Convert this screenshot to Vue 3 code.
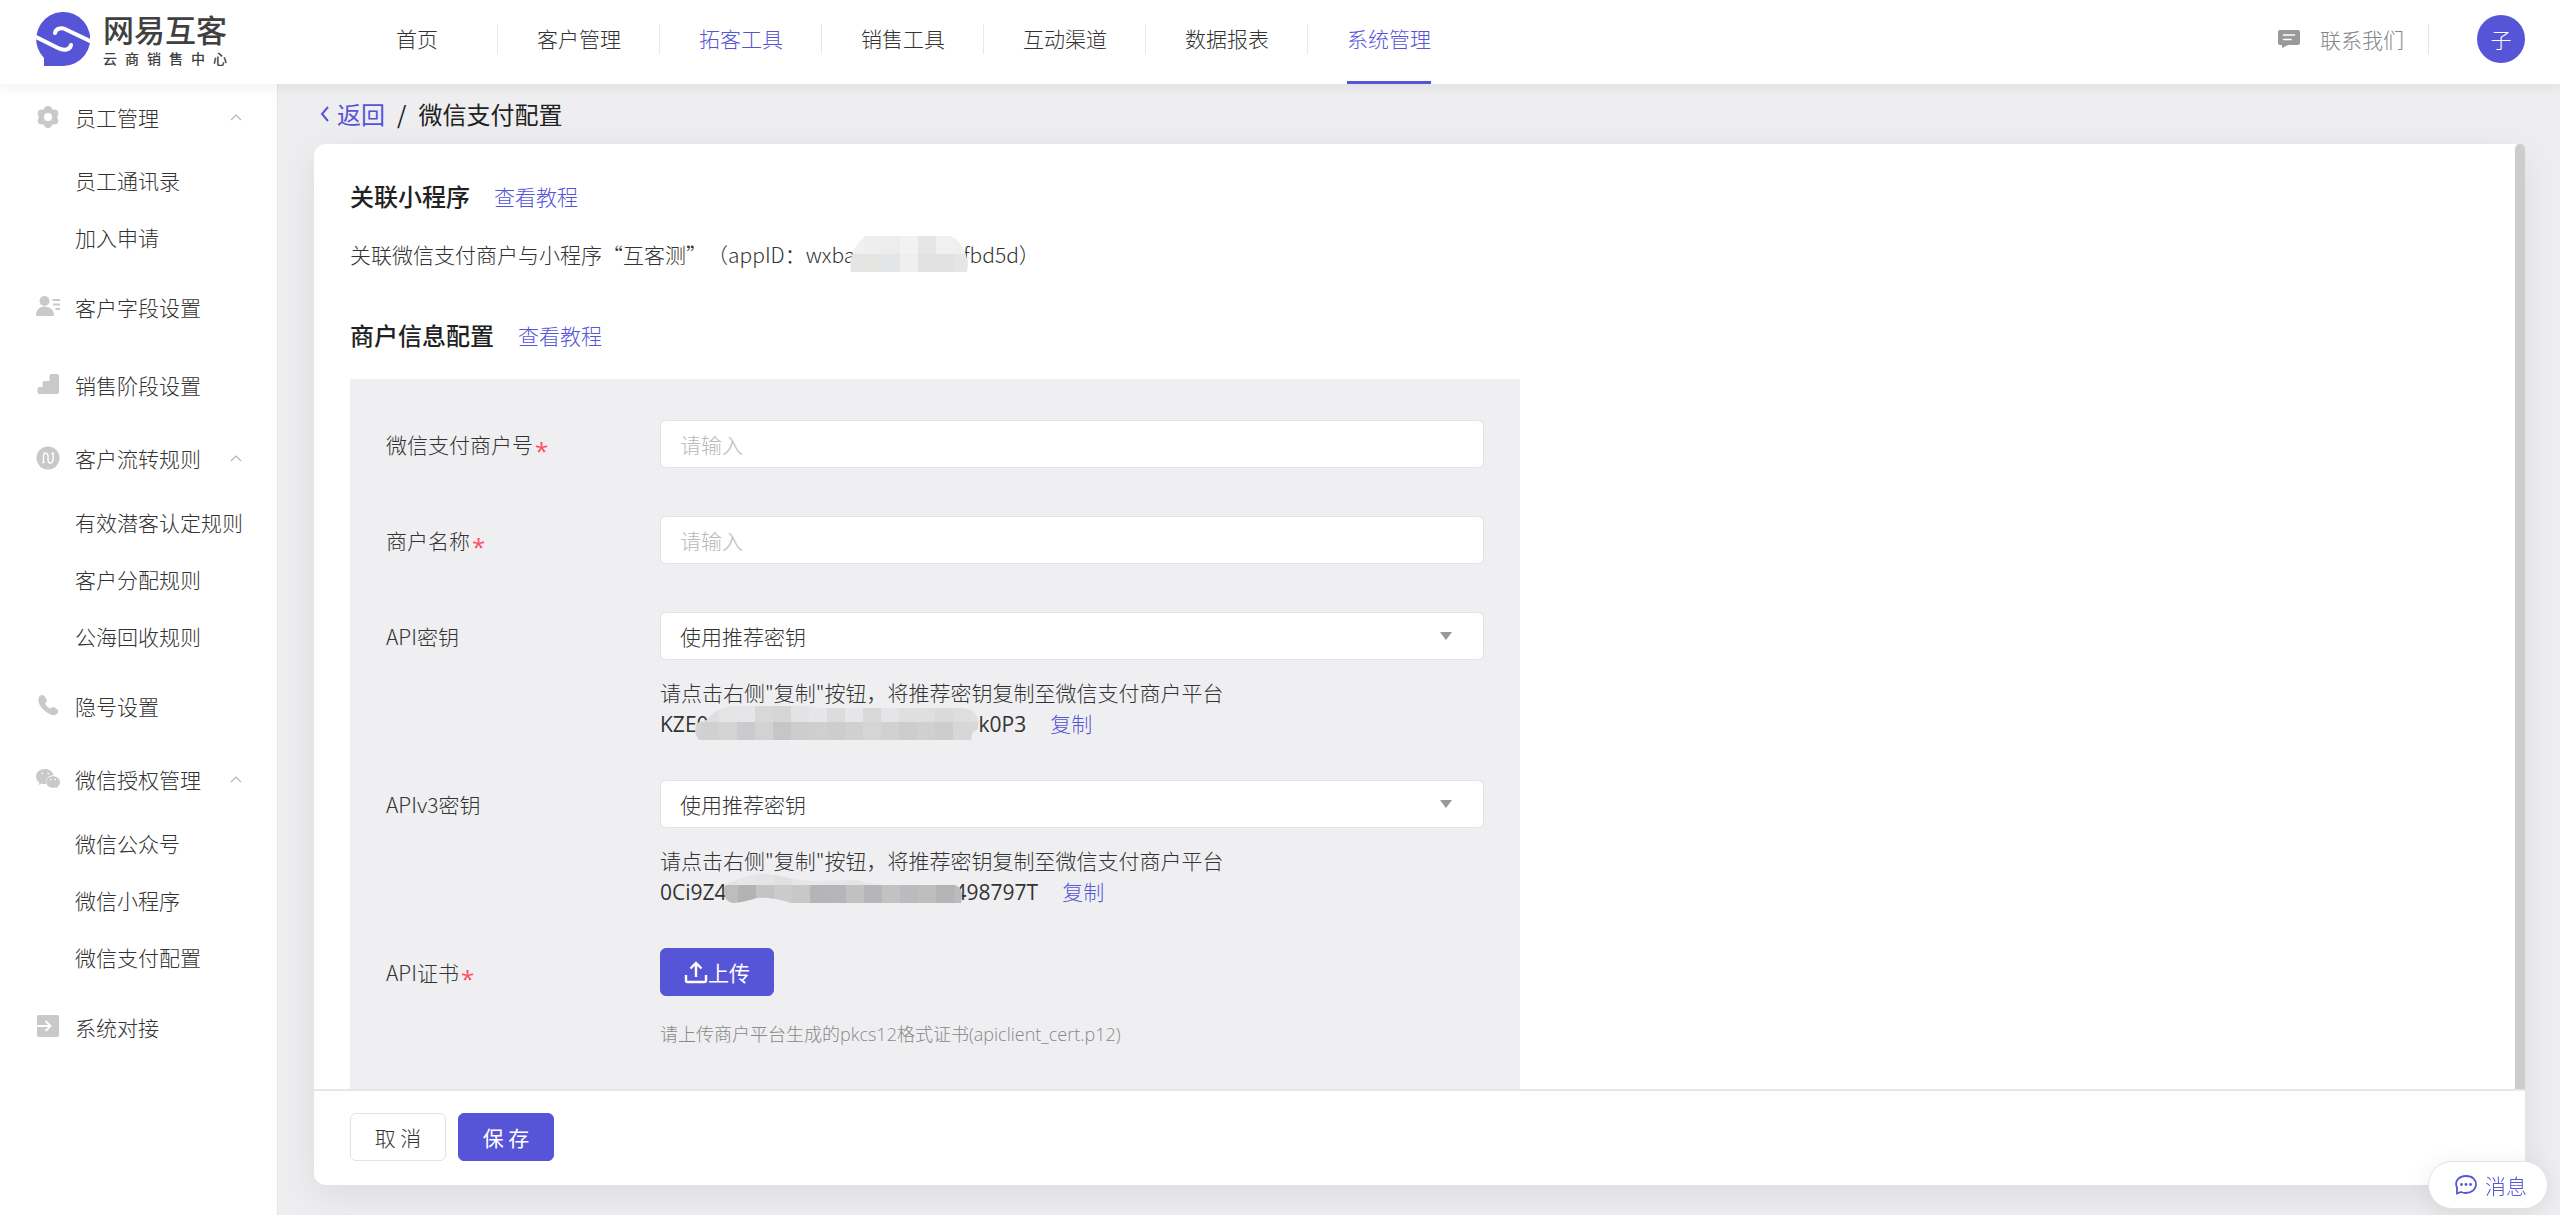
<script setup>
import { ref } from 'vue'

const navItems = ['首页', '客户管理', '拓客工具', '销售工具', '互动渠道', '数据报表', '系统管理']
const highlighted = ['拓客工具', '系统管理']
const activeNav = ref('系统管理')

const menu = [
  { label: '员工管理', icon: 'gear', children: ['员工通讯录', '加入申请'] },
  { label: '客户字段设置', icon: 'user' },
  { label: '销售阶段设置', icon: 'stairs' },
  { label: '客户流转规则', icon: 'flow', children: ['有效潜客认定规则', '客户分配规则', '公海回收规则'] },
  { label: '隐号设置', icon: 'phone' },
  { label: '微信授权管理', icon: 'wechat', children: ['微信公众号', '微信小程序', '微信支付配置'] },
  { label: '系统对接', icon: 'link' },
]

const merchantNo = ref('')
const merchantName = ref('')
const keyTip = '请点击右侧"复制"按钮，将推荐密钥复制至微信支付商户平台'

const keyFields = [
  {
    id: 'api-key', label: 'API密钥', head: 'KZE0', tail: 'k0P3', gap: 270,
    left: -14, shift: -12, split: 16,
    cover: 'M4 34C-2 26 0 18 4 16L12 14C18 4 30 0 40 0H110L128 2H268C282 4 284 12 283 20Q284 24 278 26L276 34Z',
    top: ['#dedede', '#dedede', '#e5e5e6', '#e6e6e8', '#d8d8d9', '#d6d6d7', '#e3e3e5', '#e6e6e8', '#dcdcdd', '#e6e6e8', '#d8d8d9', '#e5e5e7', '#dfdfe0', '#dfdfe0', '#dadada', '#dedede', '#e0e0e0'],
    bottom: ['#d3d3d3', '#d0d0d1', '#d4d4d5', '#cbcbcd', '#d2d2d3', '#c6c6c8', '#cdcdce', '#cfcfd0', '#cdcdce', '#d0d0d1', '#d5d5d6', '#d1d1d2', '#cdcdce', '#d0d0d1', '#cdcdce', '#d7d7d8', '#d8d8d8'],
  },
  {
    id: 'apiv3-key', label: 'APIv3密钥', head: '0Ci9Z4', tail: '498797T', gap: 228,
    left: -4, shift: -3, split: 11,
    cover: 'M10 29C2 28-1 18 2 12C14 4 30 0 44 0C60 2 72 6 90 7L133 6L160 11H232C240 14 240 22 238 29H68C54 24 40 23 34 24C26 26 18 29 10 29Z',
    top: ['#e3e3e4', '#e6e6e8', '#e4e4e6', '#e0e0e1', '#e6e6e8', '#e7e7e9', '#e6e6e8', '#e4e4e5', '#e7e7e9', '#e7e7e9', '#e7e7e9', '#e7e7e9', '#e7e7e9', '#e7e7e9'],
    bottom: ['#bdbdbe', '#b3b3b4', '#c4c4c5', '#cbcbcc', '#c8c8c9', '#b5b5b7', '#b6b6b8', '#c1c1c2', '#b6b6b8', '#c2c2c3', '#bbbbbd', '#bebebf', '#b4b4b6', '#bbbbbc'],
  },
]

const appCover = {
  top: ['#f1f1f1', '#eeeeee', '#ededee', '#f2f2f2', '#e6e6e6', '#f0f0f0', '#efefef'],
  bottom: ['#e4e4e4', '#e5e5e3', '#e3e6e9', '#efefef', '#e0e1e1', '#e1e1e1', '#e6e6e6'],
}
</script>

<template>
  <div class="app">
    <header class="header">
      <a href="#" class="brand">
        <svg class="brand-mark" viewBox="0 0 54 54" aria-hidden="true">
          <path d="M8 54V46A27 27 0 1 1 27 54Z" fill="#5655d8" />
          <path d="M19 21C20 16 26 15 31 18L56 30M-2 24L22 36C28 39 34 38 35 33" fill="none" stroke="#fff" stroke-width="4" stroke-linecap="round" />
        </svg>
        <span class="brand-text">
          <strong>网易互客</strong>
          <small>云商销售中心</small>
        </span>
      </a>
      <nav class="nav">
        <ul>
          <li v-for="item in navItems" :key="item">
            <a href="#" :class="{ tinted: highlighted.includes(item), active: item === activeNav }" @click.prevent="activeNav = item">{{ item }}</a>
          </li>
        </ul>
      </nav>
      <div class="tools">
        <a href="#" class="contact">
          <svg width="22" height="18" viewBox="0 0 22 18" aria-hidden="true">
            <path d="M2 0H20A2 2 0 0 1 22 2V13A2 2 0 0 1 20 15H10L4 18V15H2A2 2 0 0 1 0 13V2A2 2 0 0 1 2 0Z" fill="#999a9c" />
            <path d="M5.500 5H16.500M5.500 9.500H13" stroke="#fff" stroke-width="1.600" stroke-linecap="round" />
          </svg>
          联系我们
        </a>
        <button type="button" class="avatar">子</button>
      </div>
    </header>

    <div class="body">
      <aside class="sidebar">
        <nav>
          <div v-for="group in menu" :key="group.label" class="group">
            <a href="#" class="entry" :class="{ parent: group.children }">
              <svg class="entry-icon" viewBox="0 0 24 24" aria-hidden="true">
                <template v-if="group.icon === 'gear'">
                  <path d="M9 2Q12 0 15 2L16 4Q17 5 19 4.500Q22 5 22.500 8.500L21.500 11Q21 12 21.500 13L22.500 15.500Q22 19 19 19.500Q17 19 16 20L15 22Q12 24 9 22L8 20Q7 19 5 19.500Q2 19 1.500 15.500L2.500 13Q3 12 2.500 11L1.500 8.500Q2 5 5 4.500Q7 5 8 4Z" fill="#c9c9cb" />
                  <circle cx="12" cy="12" r="4" fill="#fff" />
                </template>
                <template v-else-if="group.icon === 'user'">
                  <circle cx="8.500" cy="6" r="5" fill="#c9c9cb" />
                  <path d="M0 21C0 15 3 11.500 8.500 11.500S18 15 18 21Z" fill="#c9c9cb" />
                  <path d="M16.500 5H24M17 9.500H24M19.500 14H24" stroke="#c9c9cb" stroke-width="1.800" />
                </template>
                <template v-else-if="group.icon === 'stairs'">
                  <path d="M1.500 16Q1.500 14 3.500 14H6.500V10Q6.500 8 8.500 8H13.500V3Q13.500 1 15.500 1H21Q23 1 23 3V19Q23 21 21 21H3.500Q1.500 21 1.500 19Z" fill="#c9c9cb" />
                </template>
                <template v-else-if="group.icon === 'flow'">
                  <circle cx="12" cy="12" r="11.500" fill="#c9c9cb" />
                  <path d="M7.500 16.500V10Q7.500 7 9.500 7T12 10V14Q12 17 14.300 17T17 14V8M6 16.500H8.500M15.500 8L17 7L18 8" fill="none" stroke="#fff" stroke-width="1.400" />
                </template>
                <template v-else-if="group.icon === 'phone'">
                  <path d="M3 3Q5 0 8 1.500L11 6Q11 8 9 9.500Q10.500 13 14 14.500Q16 12.500 18 13L22 16Q23 19 19 21Q15 22 9 17T2.500 7Q2 5 3 3Z" fill="#c9c9cb" />
                </template>
                <template v-else-if="group.icon === 'wechat'">
                  <path d="M9 2C3.500 2 0 5.500 0 9.500C0 12 1.300 14 3.300 15.500L2.600 18L5.800 16.500C7 17 9 17.200 10 17C9 11.500 13 8 17.500 8.200C16.500 4 13 2 9 2Z" fill="#c9c9cb" />
                  <path d="M17 9.300C13 9.300 10.300 12 10.300 15C10.300 18.300 13 20.800 17 20.800Q18.500 20.800 20 20.300L22 21.500L21.500 19.500C23 18.500 24 17 24 15C24 12 21 9.300 17 9.300Z" fill="#c9c9cb" />
                  <path d="M5.500 6.500H7M11.500 6.500H13M14 12.500H15.500M18.500 12.500H20" stroke="#fff" stroke-width="1.500" />
                </template>
                <template v-else>
                  <rect x="1" y="0" width="22" height="22" rx="2" fill="#c9c9cb" />
                  <path d="M1 11H14.500M9.500 6L14.500 11L9.500 16" fill="none" stroke="#fff" stroke-width="1.800" />
                </template>
              </svg>
              <span>{{ group.label }}</span>
              <svg v-if="group.children" class="caret" width="12" height="8" viewBox="0 0 12 8" aria-hidden="true">
                <path d="M1 7L6 2L11 7" fill="none" stroke="#b5b5b8" stroke-width="1.200" />
              </svg>
            </a>
            <a v-for="child in group.children" :key="child" href="#" class="child">{{ child }}</a>
          </div>
        </nav>
      </aside>

      <main class="main">
        <div class="crumbs">
          <a href="#">
            <svg width="10" height="16" viewBox="0 0 10 16" aria-hidden="true">
              <path d="M8 1L2 8L8 15" fill="none" stroke="#5655d8" stroke-width="2" />
            </svg>
            返回
          </a>
          <span>/</span>
          <span>微信支付配置</span>
        </div>

        <form class="card" @submit.prevent>
          <div class="scroller">
            <div class="content">
              <section>
                <div class="title"><h2>关联小程序</h2><a href="#">查看教程</a></div>
                <p class="linked">
                  关联微信支付商户与小程序“互客测”（appID：wxba<span class="app-gap"><svg class="app-cover" width="118" height="36" viewBox="0 0 118 36" aria-hidden="true">
                    <clipPath id="app-clip"><path d="M1 36Q-2 14 15 0H100Q116 6 118 30L117 36Z" /></clipPath>
                    <g clip-path="url(#app-clip)">
                      <rect v-for="(fill, i) in appCover.top" :key="'t' + i" :x="i * 18 - 4" y="0" width="18" height="18" :fill="fill" />
                      <rect v-for="(fill, i) in appCover.bottom" :key="'b' + i" :x="i * 18 - 4" y="18" width="18" height="18" :fill="fill" />
                    </g>
                  </svg></span>fbd5d）
                </p>
              </section>

              <section>
                <div class="title"><h2>商户信息配置</h2><a href="#">查看教程</a></div>
                <div class="panel">
                  <div class="row">
                    <label for="merchant-no">微信支付商户号<i>*</i></label>
                    <div class="control"><input id="merchant-no" v-model="merchantNo" type="text" placeholder="请输入" /></div>
                  </div>
                  <div class="row">
                    <label for="merchant-name">商户名称<i>*</i></label>
                    <div class="control"><input id="merchant-name" v-model="merchantName" type="text" placeholder="请输入" /></div>
                  </div>
                  <div v-for="field in keyFields" :key="field.id" class="row noted">
                    <label :for="field.id">{{ field.label }}</label>
                    <div class="control">
                      <div class="select">
                        <select :id="field.id"><option>使用推荐密钥</option></select>
                        <svg width="12" height="8" viewBox="0 0 12 8" aria-hidden="true"><path d="M0 0H12L6 8Z" fill="#98989a" /></svg>
                      </div>
                      <p class="note">{{ keyTip }}</p>
                      <p class="note key">
                        <span>{{ field.head }}</span>
                        <span class="key-gap" :style="{ width: field.gap + 'px' }">
                          <svg class="key-cover" :style="{ left: field.left + 'px' }" width="284" height="34" viewBox="0 0 284 34" aria-hidden="true">
                            <clipPath :id="field.id + '-clip'"><path :d="field.cover" /></clipPath>
                            <g :clip-path="'url(#' + field.id + '-clip)'">
                              <rect v-for="(fill, i) in field.top" :key="'t' + i" :x="i * 18 + field.shift" y="0" width="18" :height="field.split" :fill="fill" />
                              <rect v-for="(fill, i) in field.bottom" :key="'b' + i" :x="i * 18 + field.shift" :y="field.split" width="18" height="18" :fill="fill" />
                            </g>
                          </svg>
                        </span>
                        <span>{{ field.tail }}</span>
                        <a href="#">复制</a>
                      </p>
                    </div>
                  </div>
                  <div class="row">
                    <label for="upload">API证书<i>*</i></label>
                    <div class="control">
                      <button id="upload" type="button" class="btn primary">
                        <svg width="24" height="24" viewBox="0 0 24 24" aria-hidden="true">
                          <path d="M12 17V3M6.500 8.500L12 3L17.500 8.500M2 15V20.500Q2 22 3.500 22H20.500Q22 22 22 20.500V15" fill="none" stroke="#fff" stroke-width="2.400" />
                        </svg>
                        <span>上传</span>
                      </button>
                      <p class="hint">请上传商户平台生成的pkcs12格式证书(apiclient_cert.p12)</p>
                    </div>
                  </div>
                </div>
              </section>
            </div>
            <div class="scrollbar"></div>
          </div>
          <footer class="actions">
            <button type="button" class="btn">取 消</button>
            <button type="submit" class="btn primary">保 存</button>
          </footer>
        </form>
      </main>
    </div>

    <button type="button" class="message">
      <svg width="22" height="20" viewBox="0 0 22 20" aria-hidden="true">
        <path d="M2 18.500V12.500C-1 6 4 1 11 1S21 5 21 9.500S17 18 11 18Q8 18 6 17Z" fill="none" stroke="#5655d8" stroke-width="1.800" />
        <circle cx="6.500" cy="9.500" r="1.400" fill="#5655d8" />
        <circle cx="11" cy="9.500" r="1.400" fill="#5655d8" />
        <circle cx="15.500" cy="9.500" r="1.400" fill="#5655d8" />
      </svg>
      消息
    </button>
  </div>
</template>

<style>
body {
  margin: 0;
}
</style>

<style scoped>
.app {
  display: flex;
  flex-direction: column;
  height: 100vh;
  overflow: hidden;
  background: #eeeef0;
  color: #333;
  font: 300 21px/32px "Noto Sans CJK SC", "Open Sans", sans-serif;
}
.app *,
.app *::before {
  box-sizing: border-box;
}
a {
  color: inherit;
  text-decoration: none;
}
button,
input,
select {
  font: inherit;
  color: inherit;
}
button {
  cursor: pointer;
}
p,
h2,
ul {
  margin: 0;
  padding: 0;
}

.header {
  position: relative;
  z-index: 2;
  display: flex;
  align-items: center;
  height: 84px;
  flex-shrink: 0;
  padding: 0 35px 6px 36px;
  background: #fff;
  box-shadow: 0 4px 12px rgba(0, 0, 0, 0.06);
}
.brand {
  display: flex;
  gap: 13px;
  width: 300px;
}
.brand-mark {
  width: 54px;
  height: 54px;
}
.brand-text {
  display: flex;
  flex-direction: column;
  justify-content: space-between;
  width: 124px;
  color: #404041;
}
.brand-text strong {
  font-size: 31px;
  font-weight: 500;
  line-height: 34px;
}
.brand-text small {
  font-size: 14px;
  font-weight: 500;
  line-height: 16px;
  text-align-last: justify;
}
.nav ul {
  display: flex;
  list-style: none;
  padding-left: 39px;
}
.nav li {
  display: flex;
  align-items: center;
}
.nav li + li::before {
  content: "";
  width: 1px;
  height: 30px;
  margin: 0 39px 0 38px;
  background: #e9e9eb;
}
.nav a {
  min-width: 84px;
  height: 84px;
  margin-bottom: -6px;
  padding-bottom: 5px;
  border-bottom: 3px solid transparent;
  line-height: 76px;
  text-align: center;
}
.nav a.tinted {
  color: #5655d8;
}
.nav a.active {
  border-color: #5655d8;
}
.tools {
  display: flex;
  align-items: center;
  margin-left: auto;
}
.contact {
  display: flex;
  align-items: center;
  gap: 20px;
  height: 30px;
  padding-right: 24px;
  border-right: 1px solid #e5e5e7;
  color: #858687;
}
.avatar {
  width: 48px;
  height: 48px;
  margin-left: 48px;
  padding: 0;
  border: 0;
  border-radius: 50%;
  background: #5655d8;
  color: #fff;
}

.body {
  display: flex;
  flex: 1;
  min-height: 0;
}
.sidebar {
  width: 278px;
  flex-shrink: 0;
  border-right: 1px solid #e4e4e7;
  background: #fff;
}
.entry {
  display: flex;
  align-items: center;
  height: 78px;
  padding: 4px 35px 0 36px;
}
.entry.parent {
  height: 72px;
  padding-top: 0;
}
.group:first-child .entry {
  height: 68px;
  padding-bottom: 2px;
}
.entry-icon {
  width: 24px;
  height: 24px;
  margin-right: 15px;
}
.caret {
  margin-left: auto;
}
.child {
  display: block;
  padding-left: 75px;
  line-height: 57px;
}

.main {
  display: flex;
  flex: 1;
  flex-direction: column;
  min-width: 0;
  padding: 0 35px 30px 36px;
}
.crumbs {
  display: flex;
  align-items: center;
  gap: 12px;
  height: 60px;
  padding-left: 6px;
  color: #222;
  font-size: 24px;
  font-weight: 400;
}
.crumbs a {
  display: flex;
  align-items: center;
  gap: 7px;
  color: #5655d8;
}
.card {
  display: flex;
  flex: 1;
  flex-direction: column;
  min-height: 0;
  border-radius: 12px;
  background: #fff;
  box-shadow: 0 10px 40px rgba(0, 0, 0, 0.08);
}
.scroller {
  display: flex;
  flex: 1;
  min-height: 0;
  overflow: hidden;
}
.content {
  flex: 1;
  padding: 35px 36px 0;
}
.scrollbar {
  width: 10px;
  border-radius: 5px 5px 0 0;
  background: #cdcdcd;
}
.title {
  display: flex;
  align-items: center;
  gap: 24px;
  height: 34px;
}
.title h2 {
  color: #222;
  font-size: 24px;
  font-weight: 500;
}
.title a,
.key a {
  color: #5655d8;
}
.linked {
  margin: 25px 0 48px;
  text-spacing-trim: space-all;
}
.app-gap,
.key-gap {
  position: relative;
  display: inline-block;
}
.app-gap {
  width: 108px;
}
.app-cover {
  position: absolute;
  left: -5px;
  bottom: -9px;
}
.panel {
  max-width: 1170px;
  margin-top: 27px;
  padding: 41px 36px 48px;
  background: #efeff1;
}
.row {
  display: flex;
  margin-bottom: 48px;
}
.row.noted {
  margin-bottom: 40px;
}
.row label {
  width: 274px;
  height: 48px;
  flex-shrink: 0;
  line-height: 48px;
}
.row label i {
  margin-left: 2px;
  color: #ff4d5f;
  font-family: "Open Sans", sans-serif;
  font-size: 24px;
  font-style: normal;
  font-weight: 400;
  line-height: 24px;
  vertical-align: -7px;
}
.control {
  flex: 1;
  min-width: 0;
}
.control input,
.control select {
  display: block;
  width: 100%;
  height: 48px;
  padding: 0 19px;
  border: 1px solid #e2e2e6;
  border-radius: 6px;
  outline: 0;
  background: #fff;
}
.control input::placeholder {
  color: #b9b9bb;
  opacity: 1;
}
.control select {
  appearance: none;
}
.select {
  position: relative;
  margin-bottom: 16px;
}
.select svg {
  position: absolute;
  top: 20px;
  right: 32px;
  pointer-events: none;
}
.key {
  display: flex;
  font-family: "Open Sans", "Noto Sans CJK SC", sans-serif;
  font-weight: 400;
}
.key a {
  margin-left: 24px;
  font-weight: 300;
}
.key-cover {
  position: absolute;
  bottom: 0;
}
.btn {
  display: inline-flex;
  align-items: center;
  justify-content: center;
  min-width: 96px;
  height: 48px;
  padding: 0 23px;
  border: 1px solid #e2e2e6;
  border-radius: 6px;
  background: #fff;
}
.btn.primary {
  border-color: #5655d8;
  background: #5655d8;
  color: #fff;
  font-weight: 400;
}
.hint {
  margin-top: 22px;
  color: #888;
  font-family: "Open Sans", "Noto Sans CJK SC", sans-serif;
  font-size: 18px;
}
.actions {
  display: flex;
  gap: 12px;
  padding: 22px 36px 24px;
  border-top: 2px solid #e6e6e8;
}
.message {
  position: fixed;
  right: 12px;
  bottom: 6px;
  z-index: 3;
  display: flex;
  align-items: center;
  gap: 8px;
  height: 48px;
  padding: 0 20px 0 26px;
  border: 1px solid #e2e2e6;
  border-radius: 24px;
  background: #fff;
  box-shadow: 0 4px 24px rgba(0, 0, 0, 0.08);
  color: #5655d8;
}
</style>
